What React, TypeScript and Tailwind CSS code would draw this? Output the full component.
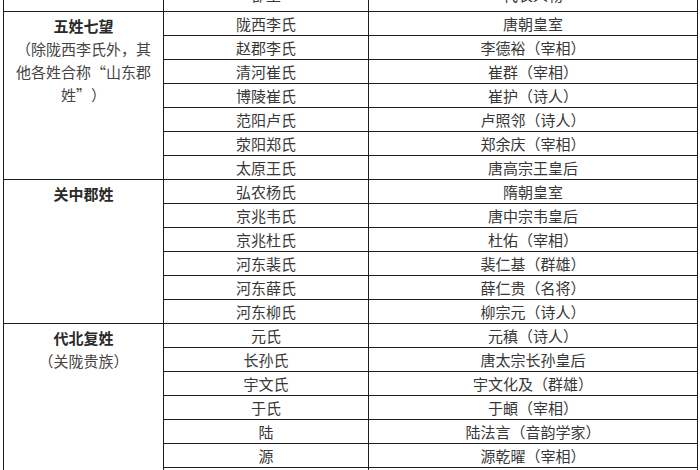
const groups = [
  {
    title: '五姓七望',
    sub: [
      <>（除陇西李氏外，其</>,
      <>
        他各姓合称<span className="inline-block w-[15px] text-right">“</span>山东郡
      </>,
      <>
        姓<span className="inline-block w-[15px] text-left">”</span>）
      </>,
    ],
    rows: [
      ['陇西李氏', '唐朝皇室'],
      ['赵郡李氏', '李德裕（宰相）'],
      ['清河崔氏', '崔群（宰相）'],
      ['博陵崔氏', '崔护（诗人）'],
      ['范阳卢氏', '卢照邻（诗人）'],
      ['荥阳郑氏', '郑余庆（宰相）'],
      ['太原王氏', '唐高宗王皇后'],
    ],
  },
  {
    title: '关中郡姓',
    sub: [],
    rows: [
      ['弘农杨氏', '隋朝皇室'],
      ['京兆韦氏', '唐中宗韦皇后'],
      ['京兆杜氏', '杜佑（宰相）'],
      ['河东裴氏', '裴仁基（群雄）'],
      ['河东薛氏', '薛仁贵（名将）'],
      ['河东柳氏', '柳宗元（诗人）'],
    ],
  },
  {
    title: '代北复姓',
    sub: [<>（关陇贵族）</>],
    rows: [
      ['元氏', '元稹（诗人）'],
      ['长孙氏', '唐太宗长孙皇后'],
      ['宇文氏', '宇文化及（群雄）'],
      ['于氏', '于頔（宰相）'],
      ['陆', '陆法言（音韵学家）'],
      ['源', '源乾曜（宰相）'],
      ['窦', '唐高祖窦皇后'],
    ],
  },
];

const cell = 'border border-[#1c1c1c] p-0 text-center align-middle leading-[22px]';
const head = 'border border-[#1c1c1c] p-0 pb-[9px] text-center align-bottom leading-[15px]';

export default function App() {
  return (
    <div
      className="w-[700px] h-[470px] overflow-hidden bg-white text-[15px] text-[#383838]"
      style={{ fontFamily: '"Noto Sans CJK SC", "Noto Sans", sans-serif' }}
    >
      <table className="table-fixed border-collapse ml-[3px] -mt-[19px] w-[694px]">
        <colgroup>
          <col className="w-[160px]" />
          <col className="w-[205px]" />
          <col className="w-[329px]" />
        </colgroup>
        <tbody>
          <tr className="h-[30px]">
            <td className={head}></td>
            <td className={head}>郡望</td>
            <td className={head}>代表人物</td>
          </tr>
          {groups.map((g) =>
            g.rows.map((r, i) => (
              <tr key={g.title + r[0]} className="h-[24px]">
                {i === 0 && (
                  <td rowSpan={g.rows.length} className="border border-[#1c1c1c] p-0 pt-[2px] text-center align-top leading-[23px]">
                    <div className="font-bold text-[#2a2a2a]">{g.title}</div>
                    {g.sub.map((s, k) => (
                      <div key={k} className="text-[#444]">{s}</div>
                    ))}
                  </td>
                )}
                <td className={cell}>{r[0]}</td>
                <td className={cell}>{r[1]}</td>
              </tr>
            ))
          )}
        </tbody>
      </table>
    </div>
  );
}
